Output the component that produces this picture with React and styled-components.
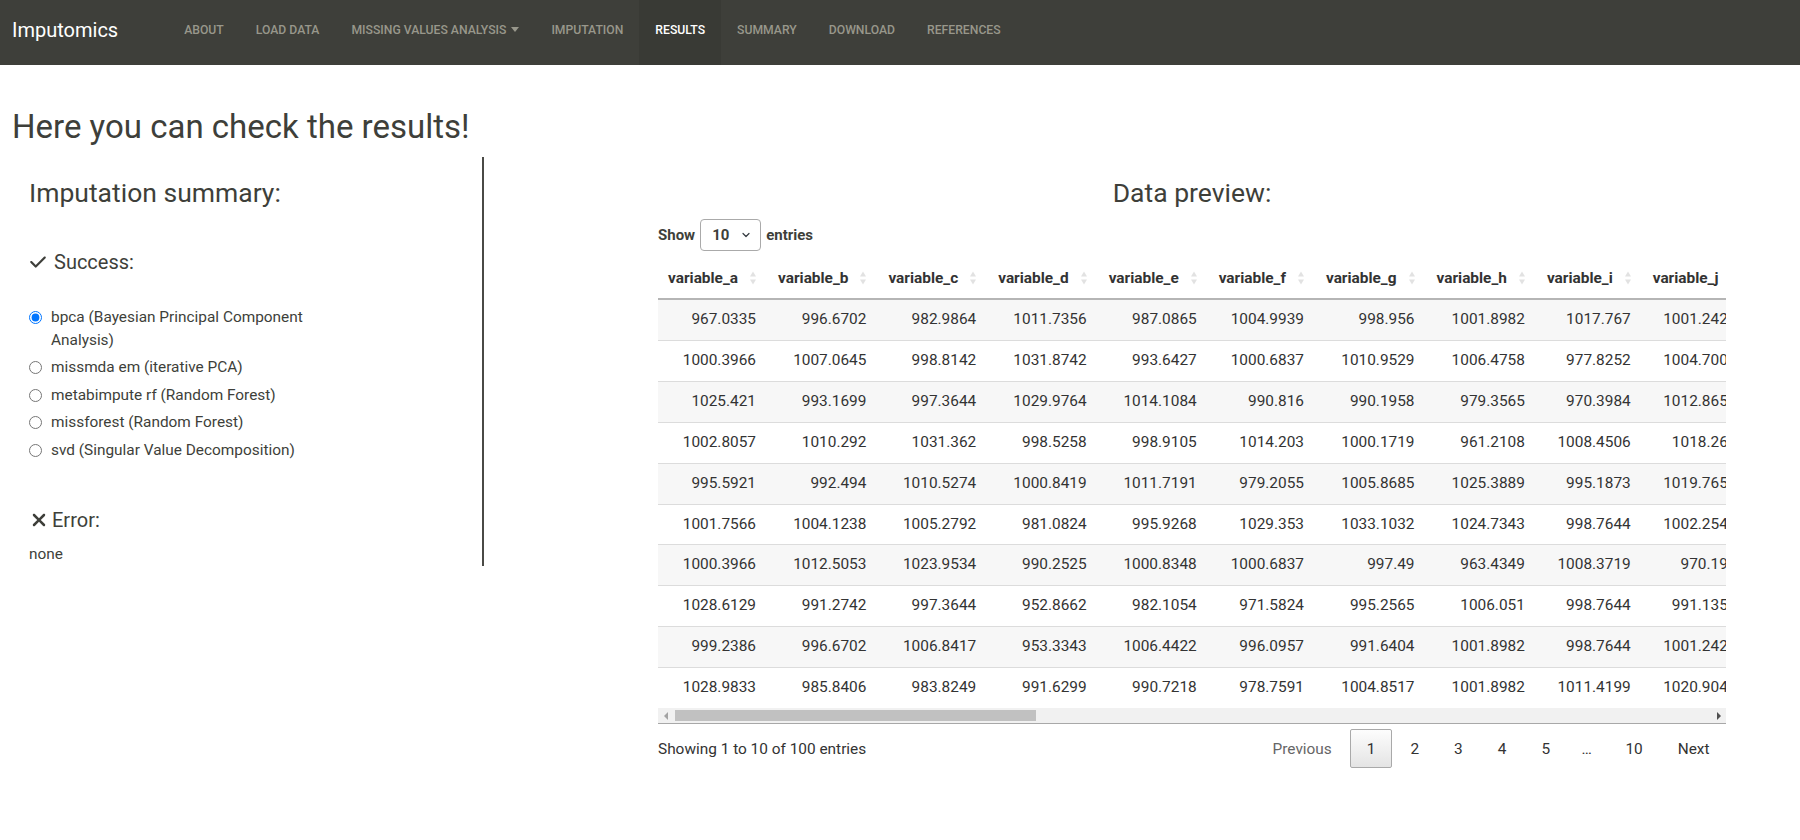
import React from "react";
import styled, { createGlobalStyle } from "styled-components";
import { FaCheck, FaXmark } from "react-icons/fa6";

const GlobalStyle = createGlobalStyle`
  body {
    margin: 0;
    background: #fff;
    font-family: Roboto, "Liberation Sans", sans-serif;
    font-size: 15.4px;
    color: #3e3f3a;
  }
  * { box-sizing: border-box; }
`;

const NAV = [
  "About",
  "Load data",
  "Missing values analysis",
  "Imputation",
  "Results",
  "Summary",
  "Download",
  "References",
];

const METHODS = [
  "bpca (Bayesian Principal Component Analysis)",
  "missmda em (iterative PCA)",
  "metabimpute rf (Random Forest)",
  "missforest (Random Forest)",
  "svd (Singular Value Decomposition)",
];

const COLUMNS = "abcdefghij".split("").map((l) => `variable_${l}`);

const ROWS = [
  ["967.0335", "996.6702", "982.9864", "1011.7356", "987.0865", "1004.9939", "998.956", "1001.8982", "1017.767", "1001.2425"],
  ["1000.3966", "1007.0645", "998.8142", "1031.8742", "993.6427", "1000.6837", "1010.9529", "1006.4758", "977.8252", "1004.7002"],
  ["1025.421", "993.1699", "997.3644", "1029.9764", "1014.1084", "990.816", "990.1958", "979.3565", "970.3984", "1012.8654"],
  ["1002.8057", "1010.292", "1031.362", "998.5258", "998.9105", "1014.203", "1000.1719", "961.2108", "1008.4506", "1018.263"],
  ["995.5921", "992.494", "1010.5274", "1000.8419", "1011.7191", "979.2055", "1005.8685", "1025.3889", "995.1873", "1019.7651"],
  ["1001.7566", "1004.1238", "1005.2792", "981.0824", "995.9268", "1029.353", "1033.1032", "1024.7343", "998.7644", "1002.2547"],
  ["1000.3966", "1012.5053", "1023.9534", "990.2525", "1000.8348", "1000.6837", "997.49", "963.4349", "1008.3719", "970.193"],
  ["1028.6129", "991.2742", "997.3644", "952.8662", "982.1054", "971.5824", "995.2565", "1006.051", "998.7644", "991.1352"],
  ["999.2386", "996.6702", "1006.8417", "953.3343", "1006.4422", "996.0957", "991.6404", "1001.8982", "998.7644", "1001.2425"],
  ["1028.9833", "985.8406", "983.8249", "991.6299", "990.7218", "978.7591", "1004.8517", "1001.8982", "1011.4199", "1020.9043"],
];

const PAGES = ["1", "2", "3", "4", "5", "…", "10"];

/* ---------- navbar ---------- */

const NavBar = styled.nav`
  display: flex;
  align-items: stretch;
  height: 65px;
  padding-left: 12px;
  background: #3e3f3a;
`;

const Brand = styled.a`
  display: flex;
  align-items: center;
  padding-bottom: 6px;
  margin-right: 50px;
  font-size: 20px;
  color: #fff;
  text-decoration: none;
`;

const NavLink = styled.a`
  display: flex;
  align-items: center;
  gap: 5px;
  padding: 0 16px 6px;
  font-size: 12.2px;
  font-weight: 500;
  text-transform: uppercase;
  text-decoration: none;
  color: ${(p) => (p.$active ? "#fff" : "#98978b")};
  background: ${(p) => (p.$active ? "#393a35" : "transparent")};
`;

const Caret = styled.span`
  width: 0;
  height: 0;
  border-left: 4px solid transparent;
  border-right: 4px solid transparent;
  border-top: 5px solid currentColor;
`;

/* ---------- page ---------- */

const Page = styled.main`
  padding: 0 12px;
`;

const Title = styled.h1`
  margin: 43px 0 11px;
  font-size: 33px;
  font-weight: 400;
  line-height: 38px;
`;

const Columns = styled.div`
  display: grid;
  grid-template-columns: 472px 1fr;
  align-items: start;
`;

const Summary = styled.section`
  padding: 0 17px;
  border-right: 2px solid #4a4a46;
`;

const PanelTitle = styled.h3`
  margin: 20px 0 0;
  font-size: 26.5px;
  font-weight: 400;
  line-height: 32px;
  text-align: ${(p) => p.$align || "left"};
`;

const StatusTitle = styled.h4`
  display: flex;
  align-items: center;
  gap: ${(p) => p.$gap}px;
  margin: ${(p) => p.$top}px 0 0;
  font-size: 20px;
  font-weight: 400;
  line-height: 24px;
  svg {
    font-size: ${(p) => p.$icon}px;
  }
`;

const RadioGroup = styled.div`
  width: 300px;
  margin-top: 32px;
`;

const RadioItem = styled.label`
  display: flex;
  align-items: flex-start;
  gap: 9px;
  margin-bottom: 5px;
  line-height: 22.5px;
  input {
    flex: none;
    width: 13px;
    height: 13px;
    margin: 5px 0 0;
  }
`;

const Plain = styled.p`
  margin: 11px 0 0;
  line-height: 22.5px;
`;

/* ---------- data preview ---------- */

const Preview = styled.section`
  min-width: 0;
  padding: 0 62px 0 174px;
`;

const Length = styled.div`
  display: flex;
  align-items: center;
  gap: 5px;
  margin: 10px 0 7px;
  font-size: 15px;
  font-weight: 700;
`;

const SelectWrap = styled.span`
  position: relative;
  display: inline-flex;
  svg {
    position: absolute;
    right: 10px;
    top: 12px;
    pointer-events: none;
  }
`;

const Select = styled.select`
  appearance: none;
  width: 61px;
  height: 32px;
  padding: 0 0 0 11px;
  border: 1px solid #aaa;
  border-radius: 4px;
  background: #fff;
  font: 700 15px Roboto, "Liberation Sans", sans-serif;
  color: #3e3f3a;
`;

const Viewport = styled.div`
  overflow: hidden;
`;

const Table = styled.table`
  border-collapse: collapse;
  white-space: nowrap;
`;

const Th = styled.th`
  position: relative;
  padding: 8px 30px 8px 10px;
  font-weight: 700;
  line-height: 24px;
  text-align: left;
  color: #333;
  border-bottom: 2px solid #b5b5b5;
`;

const SortIcon = styled.span`
  position: absolute;
  right: 12px;
  top: 50%;
  transform: translateY(-50%);
  display: flex;
  flex-direction: column;
  gap: 3px;
  &::before,
  &::after {
    content: "";
    border-left: 3.5px solid transparent;
    border-right: 3.5px solid transparent;
  }
  &::before {
    border-bottom: 5px solid #e2e2e2;
  }
  &::after {
    border-top: 5px solid #e2e2e2;
  }
`;

const Tr = styled.tr`
  background: ${(p) => (p.$odd ? "#f7f7f7" : "#fff")};
`;

const Td = styled.td`
  padding: 8px 12px 8px 10px;
  line-height: 23.9px;
  text-align: right;
  color: #333;
  border-top: 1px solid #dcdcdc;
`;

const ScrollBar = styled.div`
  display: flex;
  align-items: center;
  height: 15px;
  background: #f1f1f1;
  border-bottom: 1px solid #a8a8a8;
  box-sizing: content-box;
`;

const Arrow = styled.span`
  flex: none;
  display: flex;
  justify-content: center;
  width: 15px;
  &::before {
    content: "";
    border-top: 4px solid transparent;
    border-bottom: 4px solid transparent;
    ${(p) =>
      p.$dir === "left"
        ? "border-right: 4px solid #a3a3a3;"
        : "border-left: 4px solid #505050;"}
  }
`;

const Track = styled.div`
  flex: 1;
  display: flex;
  align-items: center;
  height: 100%;
`;

const Thumb = styled.div`
  height: 11px;
  margin-left: 2px;
  background: #c1c1c1;
`;

const Footer = styled.div`
  display: flex;
  justify-content: space-between;
  align-items: center;
  margin-top: 5px;
`;

const Info = styled.div`
  color: #333;
`;

const Pager = styled.div`
  display: flex;
  align-items: center;
`;

const PageButton = styled.a`
  min-width: 1.5em;
  margin-left: 2px;
  padding: 7.5px 15.5px;
  line-height: 22px;
  text-align: center;
  border: 1px solid ${(p) => (p.$current ? "#a9a9a9" : "transparent")};
  border-radius: 2px;
  color: ${(p) => (p.$disabled ? "#666" : "#333")};
  background: ${(p) =>
    p.$current ? "linear-gradient(to bottom, #fdfdfd 0%, #e4e4e4 100%)" : "transparent"};
`;

const Ellipsis = styled.span`
  padding: 0 15px;
  color: #333;
`;

const Chevron = () => (
  <svg width="10" height="8" viewBox="0 0 16 16" fill="none" stroke="#343a40" strokeWidth="2.4" strokeLinecap="round" strokeLinejoin="round">
    <path d="M2 5l6 6 6-6" />
  </svg>
);

export default function App() {
  return (
    <>
      <GlobalStyle />
      <NavBar>
        <Brand>Imputomics</Brand>
        {NAV.map((item) => (
          <NavLink key={item} $active={item === "Results"}>
            {item}
            {item === "Missing values analysis" && <Caret />}
          </NavLink>
        ))}
      </NavBar>

      <Page>
        <Title>Here you can check the results!</Title>
        <Columns>
          <Summary>
            <PanelTitle>Imputation summary:</PanelTitle>
            <StatusTitle $top={41} $icon={18} $gap={7}>
              <FaCheck />
              Success:
            </StatusTitle>
            <RadioGroup>
              {METHODS.map((m, i) => (
                <RadioItem key={m}>
                  <input type="radio" name="method" defaultChecked={i === 0} />
                  <span>{m}</span>
                </RadioItem>
              ))}
            </RadioGroup>
            <StatusTitle $top={47} $icon={20} $gap={3}>
              <FaXmark />
              Error:
            </StatusTitle>
            <Plain>none</Plain>
          </Summary>

          <Preview>
            <PanelTitle $align="center">Data preview:</PanelTitle>
            <Length>
              Show
              <SelectWrap>
                <Select defaultValue="10">
                  <option>10</option>
                  <option>25</option>
                  <option>50</option>
                  <option>100</option>
                </Select>
                <Chevron />
              </SelectWrap>
              entries
            </Length>
            <Viewport>
              <Table>
                <thead>
                  <tr>
                    {COLUMNS.map((c) => (
                      <Th key={c}>
                        {c}
                        <SortIcon />
                      </Th>
                    ))}
                  </tr>
                </thead>
                <tbody>
                  {ROWS.map((row, r) => (
                    <Tr key={r} $odd={r % 2 === 0}>
                      {row.map((v, c) => (
                        <Td key={c}>{v}</Td>
                      ))}
                    </Tr>
                  ))}
                </tbody>
              </Table>
            </Viewport>
            <ScrollBar>
              <Arrow $dir="left" />
              <Track>
                <Thumb style={{ width: `${(1068 / 3070) * 100}%` }} />
              </Track>
              <Arrow $dir="right" />
            </ScrollBar>
            <Footer>
              <Info>Showing 1 to 10 of 100 entries</Info>
              <Pager>
                <PageButton $disabled>Previous</PageButton>
                {PAGES.map((p) =>
                  p === "…" ? (
                    <Ellipsis key={p}>…</Ellipsis>
                  ) : (
                    <PageButton key={p} $current={p === "1"}>
                      {p}
                    </PageButton>
                  )
                )}
                <PageButton>Next</PageButton>
              </Pager>
            </Footer>
          </Preview>
        </Columns>
      </Page>
    </>
  );
}
